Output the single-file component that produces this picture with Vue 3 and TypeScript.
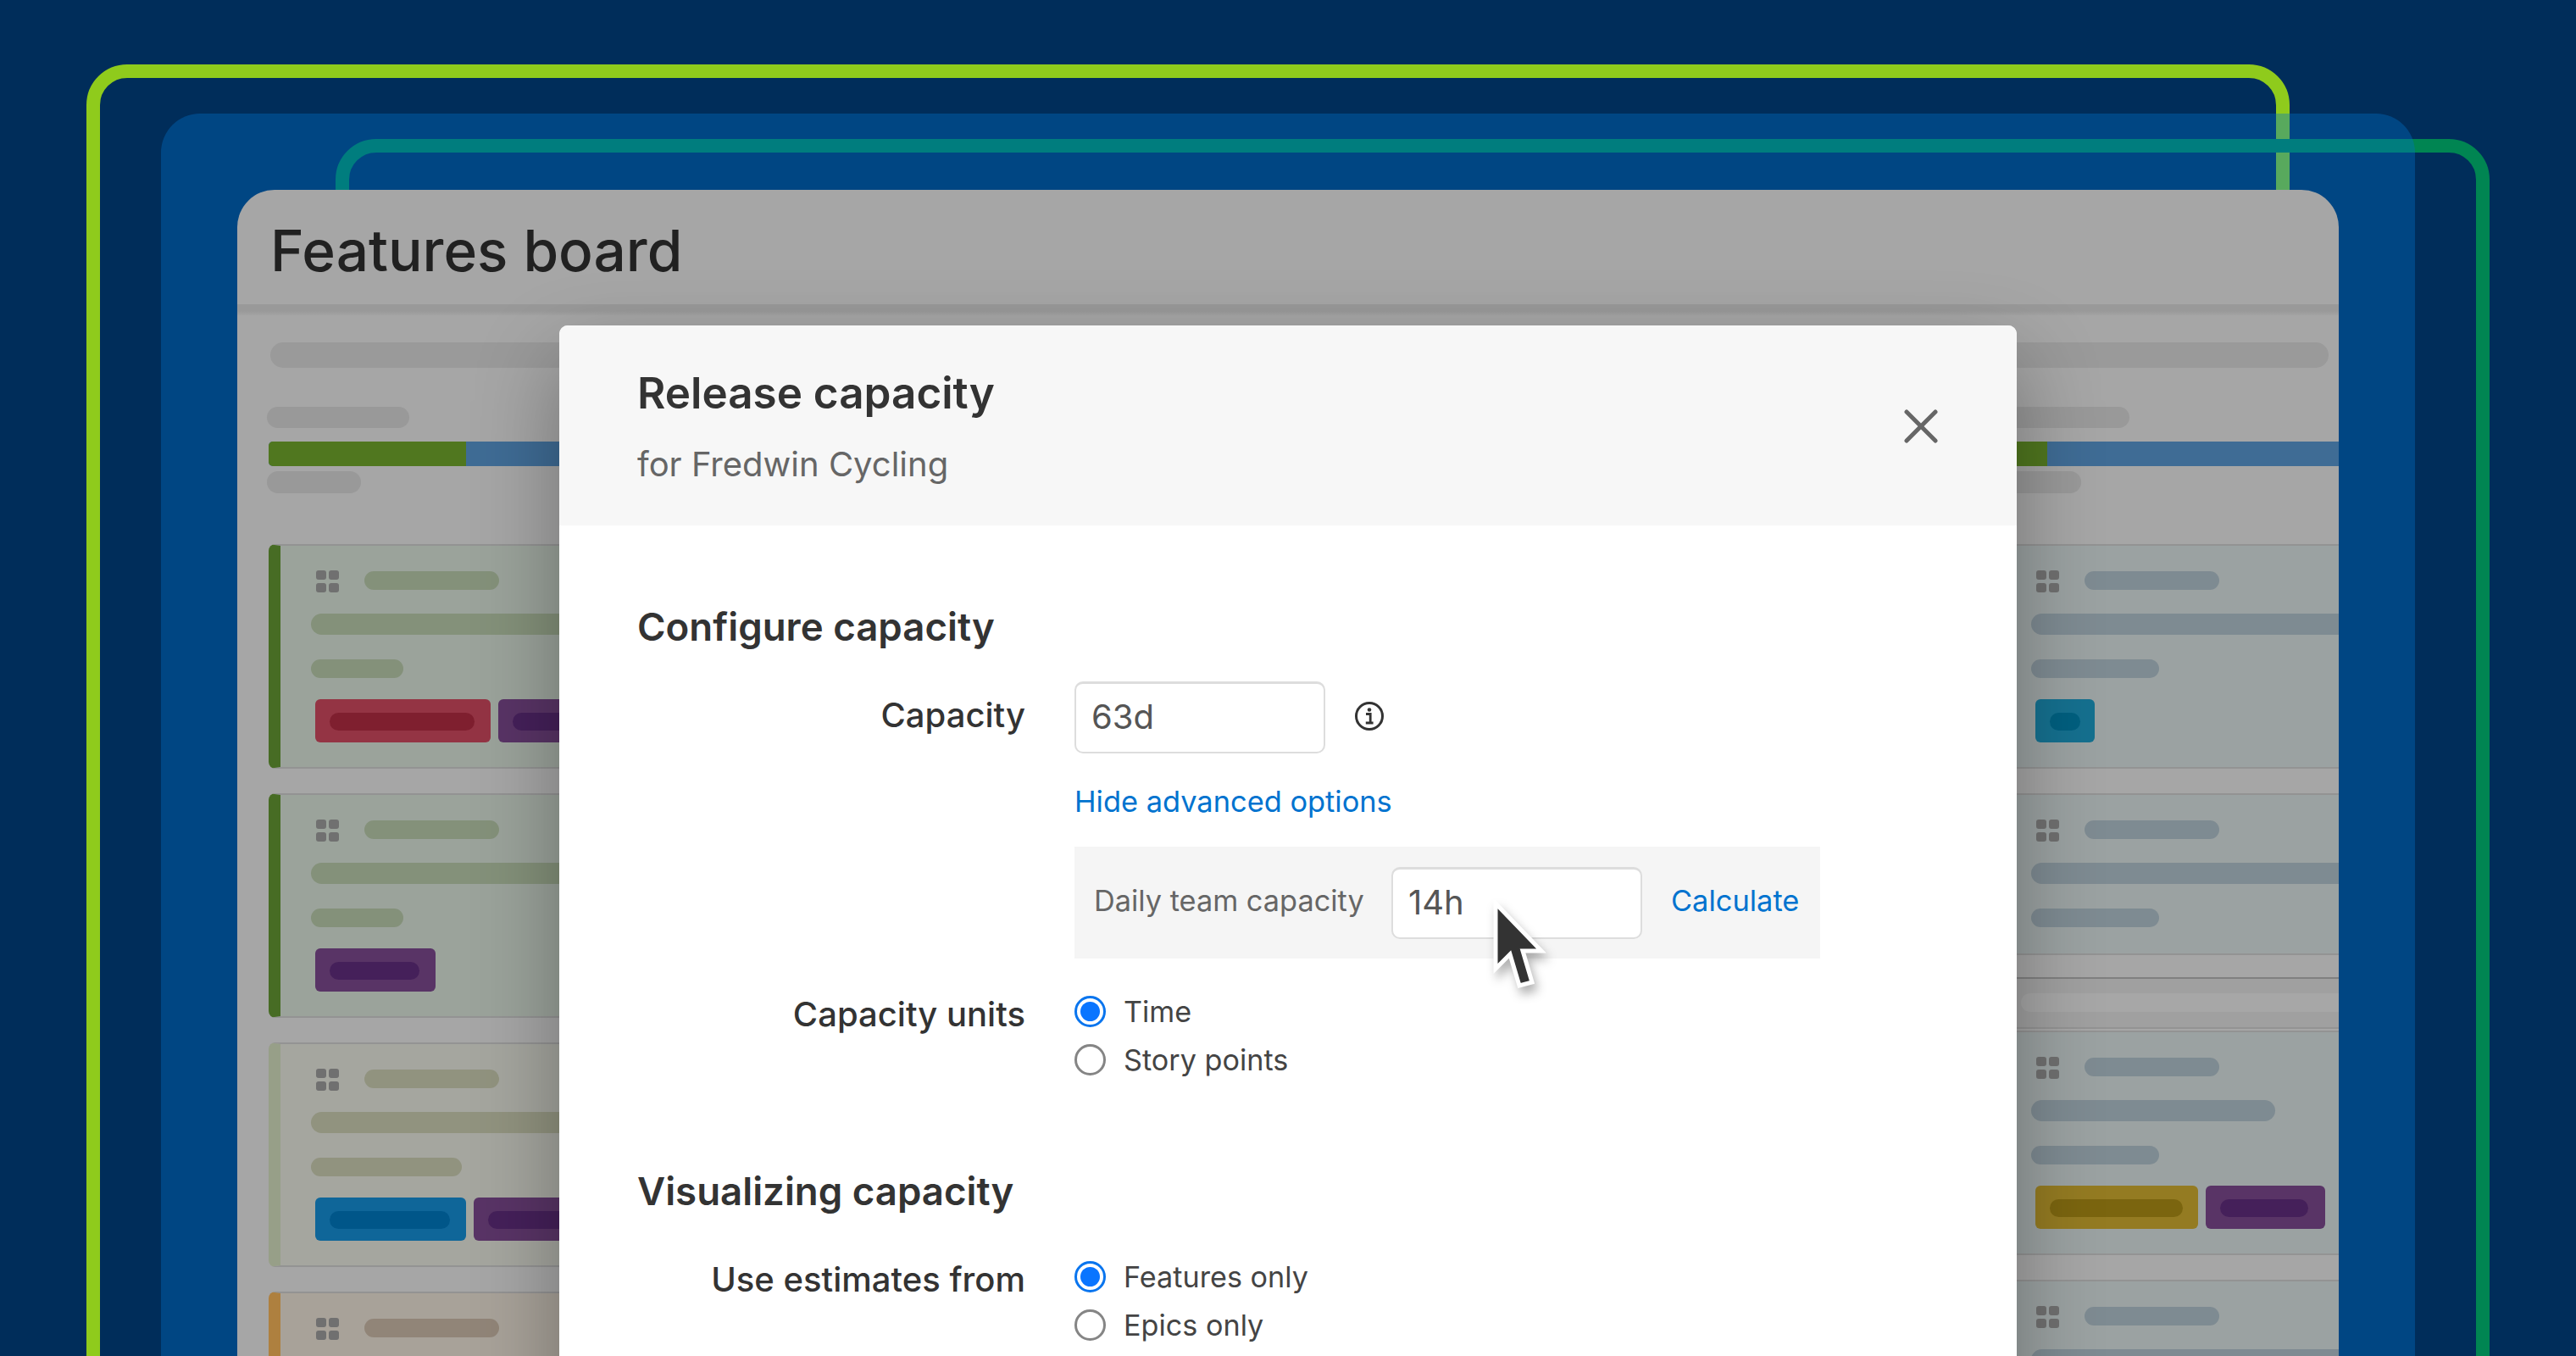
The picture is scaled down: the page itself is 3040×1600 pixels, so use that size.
<script setup lang="ts">
type Tag = { tone: string; width: number; inner: number }
type BoardCard = { tone: string; lineWidth?: number; metaWidth: number; tags: Tag[] }

const leftCards: BoardCard[] = [
  {
    tone: 'green',
    metaWidth: 109,
    tags: [
      { tone: 'red', width: 207, inner: 171 },
      { tone: 'purple', width: 142, inner: 106 },
    ],
  },
  { tone: 'green', metaWidth: 109, tags: [{ tone: 'purple', width: 142, inner: 106 }] },
  {
    tone: 'pale',
    metaWidth: 178,
    tags: [
      { tone: 'blue', width: 178, inner: 142 },
      { tone: 'purple', width: 142, inner: 106 },
    ],
  },
  { tone: 'orange', metaWidth: 109, tags: [] },
]

const rightTop: BoardCard[] = [
  { tone: 'slate', metaWidth: 151, tags: [{ tone: 'teal', width: 70, inner: 36 }] },
  { tone: 'slate', metaWidth: 151, tags: [] },
]

const rightBottom: BoardCard[] = [
  {
    tone: 'slate',
    lineWidth: 288,
    metaWidth: 151,
    tags: [
      { tone: 'yellow', width: 192, inner: 157 },
      { tone: 'purple', width: 141, inner: 104 },
    ],
  },
  { tone: 'slate', metaWidth: 151, tags: [] },
]
</script>

<template>
  <main class="stage">
    <div class="frame frame-lime"></div>
    <div class="frame frame-green"></div>
    <div class="backdrop"></div>

    <section class="board">
      <header class="board-header">
        <h1>Features board</h1>
      </header>
      <div class="header-shade"></div>
      <div class="search-bar"></div>

      <div class="columns">
        <div class="column">
          <div class="col-title"></div>
          <div class="progress">
            <span class="progress-done left-done"></span>
          </div>
          <div class="col-meta"></div>
          <div class="card-list">
            <article v-for="(card, i) in leftCards" :key="i" class="card" :class="card.tone">
              <div class="card-top">
                <span class="grid-icon"><i></i><i></i><i></i><i></i></span>
                <span class="line name"></span>
              </div>
              <span class="line long"></span>
              <span class="line meta" :style="{ width: card.metaWidth + 'px' }"></span>
              <div v-if="card.tags.length" class="tags">
                <span
                  v-for="(tag, j) in card.tags"
                  :key="j"
                  class="tag"
                  :class="tag.tone"
                  :style="{ width: tag.width + 'px' }"
                >
                  <b :style="{ width: tag.inner + 'px' }"></b>
                </span>
              </div>
            </article>
          </div>
        </div>

        <div class="column">
          <div class="col-title"></div>
          <div class="progress">
            <span class="progress-done right-done"></span>
          </div>
          <div class="col-meta"></div>
          <div class="card-list">
            <article v-for="(card, i) in rightTop" :key="i" class="card" :class="card.tone">
              <div class="card-top">
                <span class="grid-icon"><i></i><i></i><i></i><i></i></span>
                <span class="line name"></span>
              </div>
              <span class="line long"></span>
              <span class="line meta" :style="{ width: card.metaWidth + 'px' }"></span>
              <div v-if="card.tags.length" class="tags">
                <span
                  v-for="(tag, j) in card.tags"
                  :key="j"
                  class="tag"
                  :class="tag.tone"
                  :style="{ width: tag.width + 'px' }"
                >
                  <b :style="{ width: tag.inner + 'px' }"></b>
                </span>
              </div>
            </article>
          </div>
          <div class="lane"><span></span></div>
          <div class="card-list">
            <article v-for="(card, i) in rightBottom" :key="i" class="card" :class="card.tone">
              <div class="card-top">
                <span class="grid-icon"><i></i><i></i><i></i><i></i></span>
                <span class="line name"></span>
              </div>
              <span
                class="line long"
                :style="card.lineWidth ? { width: card.lineWidth + 'px' } : undefined"
              ></span>
              <span class="line meta" :style="{ width: card.metaWidth + 'px' }"></span>
              <div v-if="card.tags.length" class="tags">
                <span
                  v-for="(tag, j) in card.tags"
                  :key="j"
                  class="tag"
                  :class="tag.tone"
                  :style="{ width: tag.width + 'px' }"
                >
                  <b :style="{ width: tag.inner + 'px' }"></b>
                </span>
              </div>
            </article>
          </div>
        </div>
      </div>

      <div class="modal">
        <div class="modal-head">
          <div>
            <h2>Release capacity</h2>
            <p>for Fredwin Cycling</p>
          </div>
          <svg class="close" viewBox="0 0 40 40" width="40" height="40">
            <path d="M3 3 37 37M37 3 3 37" fill="none" stroke="#666" stroke-width="5" stroke-linecap="round" />
          </svg>
        </div>

        <div class="modal-body">
          <h3>Configure capacity</h3>

          <div class="row row-capacity">
            <label>Capacity</label>
            <div class="control">
              <div class="input-line">
                <div class="field">63d</div>
                <svg class="info" viewBox="0 0 36 36" width="36" height="36">
                  <circle cx="18" cy="18" r="15.5" fill="none" stroke="#333" stroke-width="3" />
                  <circle cx="18" cy="10.5" r="2.3" fill="#333" />
                  <path d="M14 15.5h5.2v10M13.8 26h8.8" fill="none" stroke="#333" stroke-width="2.8" />
                </svg>
              </div>
              <a class="link hide-link">Hide advanced options</a>
              <div class="advanced">
                <span class="advanced-label">Daily team capacity</span>
                <div class="field">14h</div>
                <a class="link">Calculate</a>
              </div>
            </div>
          </div>

          <div class="row row-radios">
            <label>Capacity units</label>
            <div class="control">
              <div class="radio on"><span class="dot"></span>Time</div>
              <div class="radio"><span class="dot"></span>Story points</div>
            </div>
          </div>

          <h3 class="second">Visualizing capacity</h3>

          <div class="row row-radios estimates">
            <label>Use estimates from</label>
            <div class="control">
              <div class="radio on"><span class="dot"></span>Features only</div>
              <div class="radio"><span class="dot"></span>Epics only</div>
            </div>
          </div>
        </div>

        <svg class="cursor" viewBox="0 0 70 120" width="70" height="120">
          <path
            d="M4 4V81L21 64 32 101 47 97 36 60H58Z"
            fill="#333"
            stroke="#fff"
            stroke-width="5"
            stroke-linejoin="miter"
          />
        </svg>
      </div>
    </section>
  </main>
</template>

<style scoped>
.stage {
  position: relative;
  width: 3040px;
  height: 1600px;
  overflow: hidden;
  background: #002d5a;
  font-family: Inter, 'Liberation Sans', sans-serif;
  color: #333;
}

.frame {
  position: absolute;
  box-sizing: border-box;
  border: 16px solid;
  border-radius: 48px;
  height: 1800px;
}

.frame-lime {
  left: 102px;
  top: 76px;
  width: 2600px;
  border-color: #8fcb1c;
}

.frame-green {
  left: 396px;
  top: 164px;
  width: 2542px;
  border-color: #008552;
}

.backdrop {
  position: absolute;
  left: 190px;
  top: 134px;
  width: 2660px;
  height: 1800px;
  border-radius: 46px;
  background: rgba(0, 114, 201, 0.38);
}

.board {
  position: absolute;
  left: 280px;
  top: 224px;
  width: 2480px;
  height: 1500px;
  overflow: hidden;
  border-radius: 44px 44px 0 0;
  background: #a6a6a6;
}

.board-header {
  height: 135px;
  box-sizing: border-box;
  padding-left: 39px;
  display: flex;
  align-items: center;
}

.board-header h1 {
  margin: 0;
  font-size: 67.5px;
  font-weight: 500;
  color: #212121;
  line-height: 80px;
  position: relative;
  top: 4px;
}

.header-shade {
  height: 13px;
  background: linear-gradient(#999 0 60%, #a3a3a3);
}

.search-bar {
  height: 30px;
  margin: 32px 12px 0 39px;
  border-radius: 15px;
  background: #9a9a9a;
}

.columns {
  display: grid;
  grid-template-columns: 1000px 1000px;
  column-gap: 1030px;
  padding-left: 37px;
  margin-top: 46px;
}

.col-title {
  width: 168px;
  height: 25px;
  margin-left: -2px;
  border-radius: 13px;
  background: #999;
}

.progress {
  height: 29px;
  margin-top: 16px;
  border-radius: 5px 0 0 5px;
  background: #3f6c95;
  overflow: hidden;
}

.progress-done {
  display: block;
  height: 100%;
  background: #50771f;
}

.left-done {
  width: 233px;
}

.right-done {
  width: 69px;
}

.col-meta {
  width: 111px;
  height: 26px;
  margin: 6px 0 0 -2px;
  border-radius: 13px;
  background: #999;
}

.card-list {
  display: flex;
  flex-direction: column;
  gap: 29px;
  margin-top: 60px;
}

.lane + .card-list {
  margin-top: 2px;
}

.card {
  box-sizing: border-box;
  min-height: 191px;
  border: 2px solid #939393;
  border-left: 14px solid;
  border-radius: 8px;
  padding: 29px 0 29px 36px;
  display: flex;
  flex-direction: column;
}

.card-top {
  display: flex;
  align-items: flex-start;
  height: 26px;
}

.grid-icon {
  display: grid;
  grid-template-columns: 12px 12px;
  grid-auto-rows: 11px;
  gap: 4px 3px;
  margin-left: 6px;
}

.grid-icon i {
  border-radius: 3px;
  background: #707070;
}

.line {
  display: block;
  border-radius: 13px;
}

.name {
  width: 159px;
  height: 22px;
  margin-left: 30px;
  margin-top: 1px;
}

.long {
  height: 25px;
  margin-top: 25px;
}

.meta {
  height: 22px;
  margin-top: 29px;
}

.tags {
  display: flex;
  gap: 9px;
  margin: 25px 0 0 5px;
}

.tag {
  box-sizing: border-box;
  height: 51px;
  padding: 16px 0 0 17px;
  border-radius: 6px;
}

.tag b {
  display: block;
  height: 21px;
  border-radius: 11px;
}

.tag.red {
  background: #943444;
}
.tag.red b {
  background: #7f1f2f;
}
.tag.purple {
  background: #593466;
}
.tag.purple b {
  background: #45205a;
}
.tag.blue {
  background: #0f6699;
}
.tag.blue b {
  background: #005689;
}
.tag.teal {
  background: #15708f;
}
.tag.teal b {
  background: #005f7f;
}
.tag.yellow {
  background: #947b22;
}
.tag.yellow b {
  background: #7b650f;
}

.card.green {
  background: #9ba39b;
  border-left-color: #476c24;
}
.card.green .line {
  background: #84917a;
}
.card.pale {
  background: #a5a69f;
  border-left-color: #979f88;
}
.card.pale .line {
  background: #91937f;
}
.card.orange {
  background: #a8a299;
  border-left-color: #ae803f;
}
.card.orange .line {
  background: #918578;
}
.card.slate {
  background: #9ba2a2;
  border-left-color: #82888a;
}
.card.slate .line {
  background: #7e8b92;
}

.lane {
  box-sizing: border-box;
  height: 61px;
  margin-top: 26px;
  padding: 17px 0 0 38px;
  border-top: 2px solid #808080;
  border-bottom: 2px solid #939393;
  background: #a0a0a0;
}

.lane span {
  display: block;
  height: 22px;
  border-radius: 11px;
  background: #a7a7a7;
}

/* modal sits over the dimmed board */
.modal {
  position: absolute;
  left: 380px;
  top: 160px;
  width: 1720px;
  height: 1400px;
  border-radius: 10px 10px 0 0;
  background: #fff;
  box-shadow: 0 40px 100px rgba(0, 0, 0, 0.32);
}

.modal-head {
  box-sizing: border-box;
  height: 236px;
  padding: 0 92px;
  border-radius: 10px 10px 0 0;
  background: #f7f7f7;
  display: flex;
  justify-content: space-between;
  align-items: flex-start;
}

.modal-head h2 {
  margin: 47px 0 0;
  font-size: 51.2px;
  line-height: 64px;
  font-weight: 600;
  color: #333;
}

.modal-head p {
  margin: 29px 0 0;
  font-size: 40px;
  line-height: 48px;
  color: #666;
}

.close {
  margin: 99px 1px 0 0;
}

.modal-body {
  padding: 90px 92px 0;
}

.modal-body h3 {
  margin: 0;
  font-size: 45.6px;
  line-height: 60px;
  font-weight: 600;
}

.modal-body h3.second {
  margin-top: 97px;
}

.row {
  display: grid;
  grid-template-columns: 458px 1fr;
  column-gap: 58px;
}

.row-capacity {
  margin-top: 34px;
}

.row-radios {
  margin-top: 34px;
}

.row-radios.estimates {
  margin-top: 42px;
}

.row label {
  text-align: right;
  font-size: 40px;
  font-weight: 500;
  line-height: 48px;
  padding-top: 16px;
}

.row-radios label {
  padding-top: 8px;
}

.input-line {
  display: flex;
  align-items: center;
  gap: 34px;
}

.info {
  margin-top: -3px;
}

.field {
  box-sizing: border-box;
  flex-shrink: 0;
  width: 296px;
  height: 85px;
  padding: 0 18px;
  border: 2px solid #ddd;
  border-top-width: 3px;
  border-radius: 10px;
  background: #fff;
  font-size: 40px;
  line-height: 78px;
  color: #555;
}

.link {
  color: #0073cf;
  font-size: 34.4px;
  line-height: 44px;
}

.hide-link {
  display: block;
  margin: 35px 0 31px;
}

.advanced {
  box-sizing: border-box;
  width: 880px;
  height: 132px;
  padding: 0 0 0 23px;
  display: flex;
  align-items: center;
  background: #f5f5f5;
}

.advanced-label {
  width: 351px;
  font-size: 34.3px;
  line-height: 44px;
  color: #666;
  position: relative;
  top: -2px;
}

.advanced .link {
  position: relative;
  top: -2px;
}

.advanced .field {
  margin-right: 34px;
}

.radio {
  height: 57px;
  display: flex;
  align-items: center;
  gap: 21px;
  font-size: 34.2px;
  color: #444;
}

.dot {
  box-sizing: border-box;
  width: 37px;
  height: 37px;
  border: 3px solid #858585;
  border-radius: 50%;
  background: #fff;
}

.radio.on .dot {
  border-color: #0a75ee;
  padding: 4px;
  background: #0a75ff content-box;
}

.cursor {
  position: absolute;
  left: 1101px;
  top: 678px;
  filter: drop-shadow(4px 8px 6px rgba(0, 0, 0, 0.3));
}
</style>
